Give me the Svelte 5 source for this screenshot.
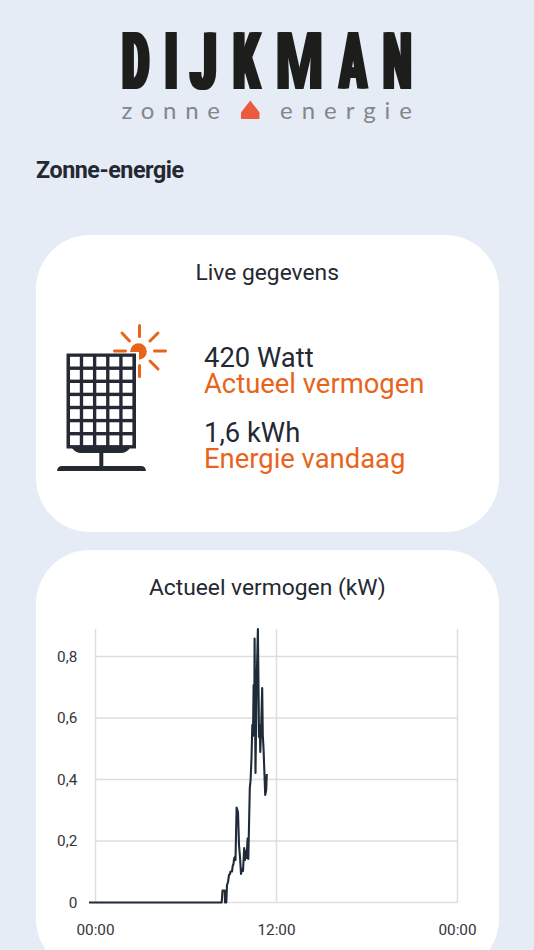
<script>
    // Every logo letter gets its own squeeze, the wordmark is much narrower than the font.
    // left/ink are the side bearing and the drawn width per em, bold is extra stem width in px
    const size = 80.3
    const letters = [
        { char: "D", x: 122.3, width: 28.4, left: 0.044, ink: 0.584, bold: 4.6 },
        { char: "I", x: 165.2, width: 11.8, left: 0.051, ink: 0.19, bold: 0 },
        { char: "J", x: 189.2, width: 28.4, left: 0.015, ink: 0.52, bold: 3.6 },
        { char: "K", x: 232.6, width: 29.6, left: 0.044, ink: 0.612, bold: 4 },
        { char: "M", x: 277.2, width: 45, left: 0.047, ink: 0.784, bold: 1.6 },
        { char: "A", x: 337.6, width: 30.2, left: 0.005, ink: 0.669, bold: 4 },
        { char: "N", x: 383.2, width: 28.2, left: 0.044, ink: 0.603, bold: 3.8 }
    ]

    function squeeze(l) {
        const sx = l.width / (l.ink * size + 2 * l.bold)
        const shift = (l.bold - l.left * size) * sx
        return `transform: translateX(${shift}px) scaleX(${sx}); text-shadow: ${l.bold}px 0 #1d1d1b, ${-l.bold}px 0 #1d1d1b`
    }

    // distance to the end of the letter before
    function gap(i) {
        return i == 0 ? letters[0].x : letters[i].x - letters[i - 1].x - letters[i - 1].width
    }

    const stats = [
        { value: "420 Watt", label: "Actueel vermogen" },
        { value: "1,6 kWh", label: "Energie vandaag" }
    ]

    const columns = [0, 1, 2, 3, 4]
    const rows = [0, 1, 2, 3, 4, 5, 6]

    const yTicks = [
        { label: "0,8", y: 31.5 },
        { label: "0,6", y: 93 },
        { label: "0,4", y: 154.5 },
        { label: "0,2", y: 216 },
        { label: "0", y: 277.5 }
    ]
    const xTicks = [
        { label: "00:00", x: 59.5 },
        { label: "12:00", x: 240.5 },
        { label: "00:00", x: 421.5 }
    ]

    const power = [
        [53, 277.5], [185.7, 277.5], [186.5, 265.5], [188.7, 265.5], [189, 277.5], [190.3, 277.5],
        [191, 260], [192, 257], [193, 250], [194, 249], [194.5, 246.5], [196, 246.5], [196.7, 241],
        [197.5, 239], [198, 234], [198.7, 232], [199.5, 235], [200.6, 182.5], [202, 187], [203, 220],
        [204, 232], [205, 249], [206, 244], [207, 246], [208.2, 223], [208.9, 235], [210, 226],
        [210.6, 233], [211.6, 213.5], [212.3, 234], [213.8, 163], [214.6, 155], [215.5, 133],
        [216.3, 100], [217, 111], [217.6, 60], [218.2, 110], [218.6, 13.5], [219.5, 148], [220.6, 60],
        [221.9, 4], [222.6, 70], [223, 112], [223.6, 100], [224.3, 127], [225.2, 100], [226.2, 63],
        [226.8, 110], [227.6, 125], [229.2, 170], [230.2, 165], [230.8, 149]
    ]
    const line = power.map((p) => p.join(",")).join(" ")
</script>

<main>
    <header class="logo">
        <div class="word">
            {#each letters as letter, i}
                <span style="margin-left: {gap(i)}px; width: {letter.width}px">
                    <b style={squeeze(letter)}>{letter.char}</b>
                </span>
            {/each}
        </div>
        <svg class="sub" viewBox="0 0 534 34">
            <text x="121.500" y="23" textLength="98.500">zonne</text>
            <path d="M241 23v-6.500l9.300-12 9.200 12v6.500z" fill="#e95b3c" />
            <text x="280" y="23" textLength="132">energie</text>
        </svg>
    </header>

    <h1>Zonne-energie</h1>

    <section class="card live">
        <h2>Live gegevens</h2>
        <div class="content">
            <svg class="panel" width="112" height="150" viewBox="0 0 112 150">
                <path d="M83.500 5.500v11M83.500 45.500v11M58.500 31h11M98.500 31h11M66 13l7.500 8M102 13l-8 8M94 41l8 8" stroke="#e8641b" stroke-width="3" stroke-linecap="round" />
                <circle cx="82.500" cy="31.500" r="8.300" fill="#e8641b" />
                <path d="M70 32h13v12h-13z" fill="#fff" />
                <path d="M10.500 33.500h69.500v95h-69.500z" fill="#242933" />
                {#each rows as row}
                    {#each columns as col}
                        <rect x={14 + col * 13.15} y={36.8 + row * 13.1} width="9.800" height="9.700" fill="#fff" />
                    {/each}
                {/each}
                <path d="M16 128h58q-3.500 5-9 5h-40q-5.500 0-9-5z" fill="#242933" />
                <path d="M43.300 132h4v15h-4z" fill="#242933" />
                <path d="M1 151q.5-5 5-5h79q4.500 0 5 5z" fill="#242933" />
            </svg>
            <div class="stats">
                {#each stats as stat}
                    <div class="stat">
                        <div class="value">{stat.value}</div>
                        <div class="label">{stat.label}</div>
                    </div>
                {/each}
            </div>
        </div>
    </section>

    <section class="card graph">
        <h2>Actueel vermogen (kW)</h2>
        <svg class="chart" width="462" height="320" viewBox="0 0 462 320">
            <g stroke="#dedede" stroke-width="1.500">
                {#each yTicks as tick}
                    <path d="M59.500 {tick.y}H421.500" />
                {/each}
                {#each xTicks as tick}
                    <path d="M{tick.x} 4V277.500" />
                {/each}
            </g>
            {#each yTicks as tick}
                <text x="41.300" y={tick.y + 5} text-anchor="end">{tick.label}</text>
            {/each}
            {#each xTicks as tick}
                <text x={tick.x} y="310" text-anchor="middle">{tick.label}</text>
            {/each}
            <polyline points={line} fill="none" stroke="#1f2b38" stroke-width="2.100" stroke-linejoin="round" />
        </svg>
    </section>
</main>

<style>
    :global(body) {
        margin: 0;
    }
    main {
        height: 950px;
        overflow: hidden;
        background-color: #e5ecf5;
        color: #242832;
        font-family: Roboto, sans-serif;
    }
    .logo {
        box-sizing: border-box;
        height: 130px;
        padding-top: 33px;
    }
    .word {
        display: flex;
        height: 63px;
        font-size: 80.3px;
        line-height: 58px;
        color: #1d1d1b;
    }
    .word span {
        flex: none;
    }
    .word b {
        display: block;
        width: max-content;
        font-weight: 900;
        transform-origin: left;
    }
    .sub {
        display: block;
        width: 534px;
        height: 34px;
    }
    .sub text {
        font-family: Lato, sans-serif;
        font-size: 24px;
        fill: #858688;
    }
    h1 {
        margin: 25px 36px 50px;
        font-size: 23.3px;
        line-height: 30px;
        font-weight: 700;
        letter-spacing: -0.45px;
    }
    .card {
        box-sizing: border-box;
        width: 462.5px;
        margin: 0 36px;
        background-color: #fff;
        border-radius: 54px;
        overflow: hidden;
    }
    .live {
        height: 296.5px;
        margin-bottom: 18.7px;
    }
    .graph {
        height: 423px;
    }
    h2 {
        margin: 0;
        padding-top: 23px;
        font-size: 22.8px;
        line-height: 30px;
        font-weight: 400;
        text-align: center;
    }
    .content {
        display: flex;
        padding: 32px 0 0 20px;
    }
    .panel {
        flex: none;
        overflow: visible;
    }
    .stats {
        display: flex;
        flex-direction: column;
        gap: 23px;
        padding: 25px 0 0 36px;
    }
    .value,
    .label {
        font-size: 27.4px;
        line-height: 26px;
        white-space: nowrap;
    }
    .label {
        color: #e8641b;
    }
    .chart {
        display: block;
        margin-top: 21.8px;
    }
    .chart text {
        font-size: 15.3px;
        fill: #33363d;
    }
</style>
